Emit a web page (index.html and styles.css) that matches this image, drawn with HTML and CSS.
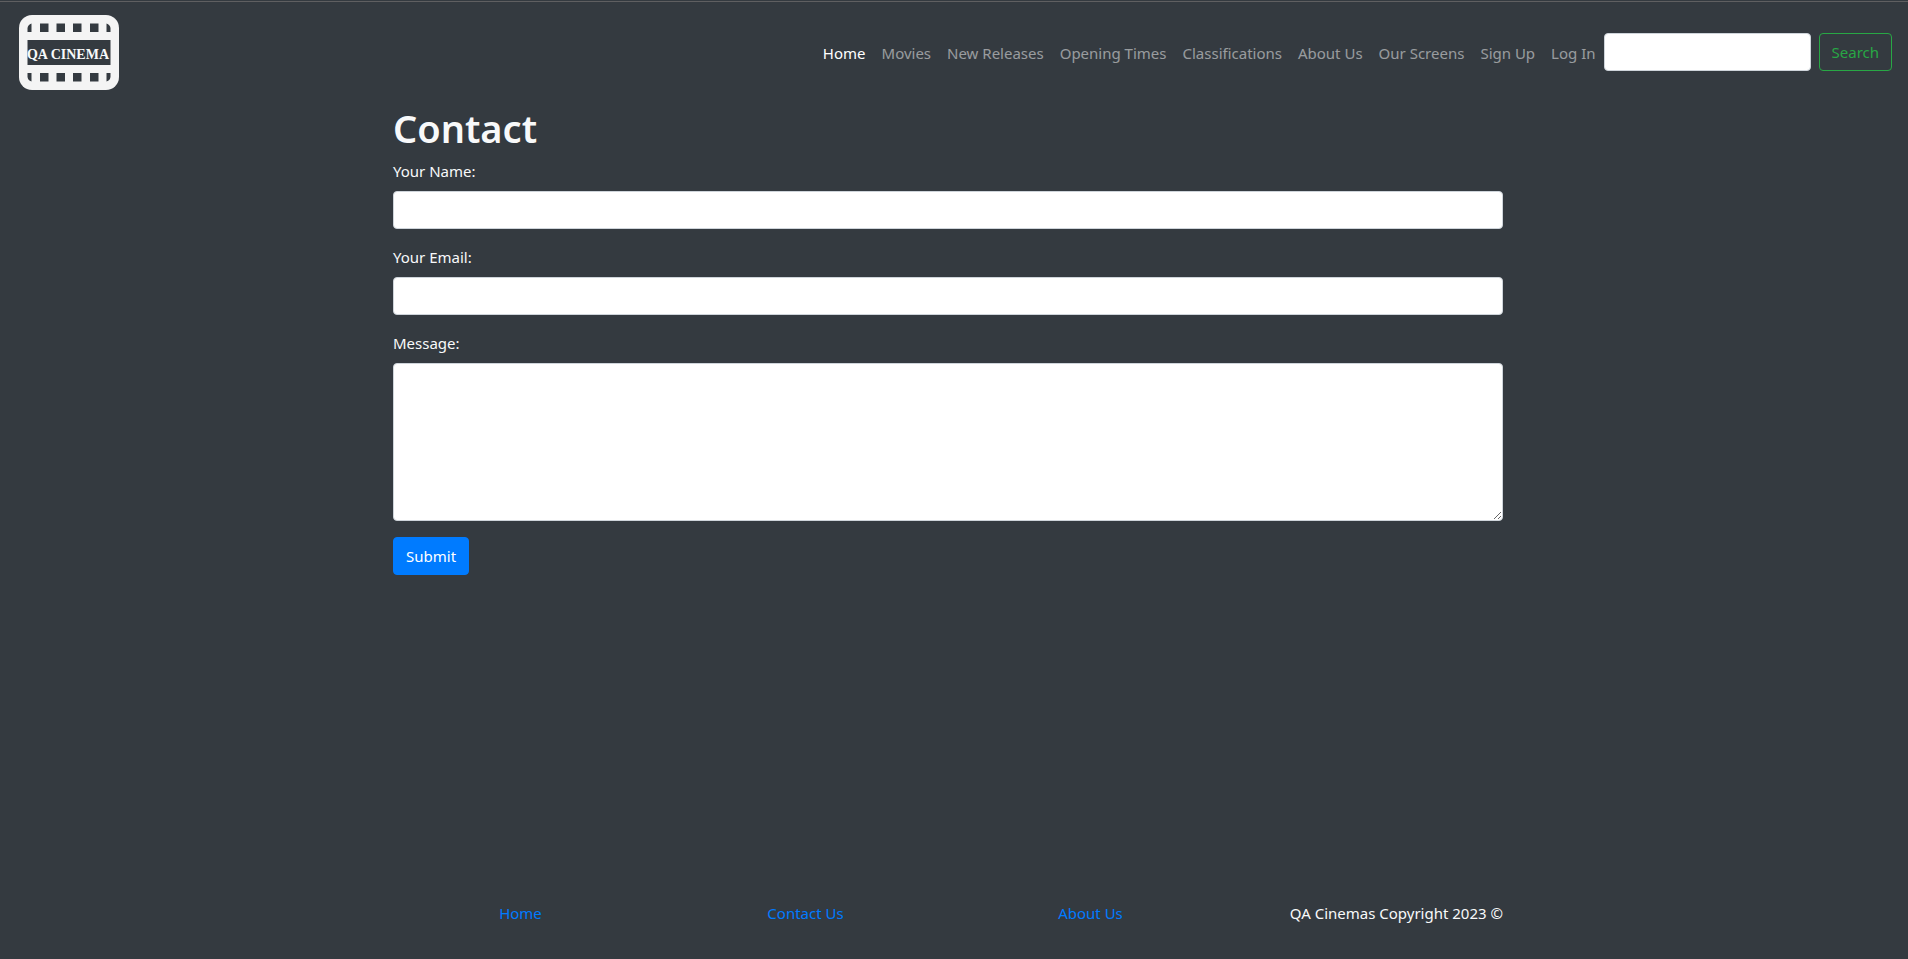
FILE: index.html
```html
<!DOCTYPE html>
<html lang="en">
<head>
<meta charset="utf-8">
<meta name="viewport" content="width=device-width, initial-scale=1">
<title>QA Cinema - Contact</title>
<link rel="stylesheet" href="styles.css">
</head>
<body>
<header class="navbar">
  <a class="brand" href="#" aria-label="QA Cinema">
    <svg class="logo" viewBox="0 0 100 75" width="100" height="75">
      <rect width="100" height="75" rx="13" fill="#f4f4f4"/>
      <g fill="#343a40">
        <path d="M12.500 8.500V17H8.500V13Q9 9.500 12.500 8.500ZM87.500 8.500V17H91.500V13Q91 9.500 87.500 8.500ZM12.500 66.500V58H8.500V62Q9 65.500 12.500 66.500ZM87.500 66.500V58H91.500V62Q91 65.500 87.500 66.500Z"/>
        <path d="M21 8.500h8.500V17H21zM37.500 8.500H46V17h-8.500zM54 8.500h8.500V17H54zM71 8.500h8.500V17H71zM21 58h8.500v8.500H21zM37.500 58H46v8.500h-8.500zM54 58h8.500v8.500H54zM71 58h8.500v8.500H71z"/>
        <rect x="8.500" y="25" width="83" height="25"/>
      </g>
      <text class="logo-text" x="49" y="44" text-anchor="middle">QA CINEMA</text>
    </svg>
  </a>
  <nav class="nav">
    <a class="nav-link active" href="#">Home</a>
    <a class="nav-link" href="#">Movies</a>
    <a class="nav-link" href="#">New Releases</a>
    <a class="nav-link" href="#">Opening Times</a>
    <a class="nav-link" href="#">Classifications</a>
    <a class="nav-link" href="#">About Us</a>
    <a class="nav-link" href="#">Our Screens</a>
    <a class="nav-link" href="#">Sign Up</a>
    <a class="nav-link" href="#">Log In</a>
  </nav>
  <form class="search">
    <input class="control search-input" type="search" aria-label="Search">
    <button class="btn btn-outline" type="submit">Search</button>
  </form>
</header>
<main class="container">
  <h1 class="title">Contact</h1>
  <form>
    <div class="group">
      <label class="label" for="name">Your Name:</label>
      <input class="control" id="name" type="text">
    </div>
    <div class="group">
      <label class="label" for="email">Your Email:</label>
      <input class="control" id="email" type="email">
    </div>
    <div class="group">
      <label class="label" for="message">Message:</label>
      <textarea class="control message" id="message" rows="6"></textarea>
    </div>
    <button class="btn btn-primary" type="submit">Submit</button>
  </form>
</main>
<footer class="footer">
  <div class="container footer-row">
    <a class="footer-link" href="#">Home</a>
    <a class="footer-link" href="#">Contact Us</a>
    <a class="footer-link" href="#">About Us</a>
    <span class="copyright">QA Cinemas Copyright 2023 ©</span>
  </div>
</footer>
</body>
</html>
```
FILE: styles.css
```css
*, *::before, *::after {
  box-sizing: border-box;
}

body {
  display: flex;
  flex-direction: column;
  min-height: 100vh;
  margin: 0;
  padding-top: 1px;
  background: #343a40;
  color: #f8f9fa;
  font-family: "Segoe UI", "Noto Sans", "Open Sans", sans-serif;
  font-size: 15px;
  line-height: 24px;
}

.navbar {
  display: flex;
  align-items: center;
  padding: 13px 16px;
  border-top: 1px solid #5f5f61;
}

.brand {
  display: flex;
  margin-left: 3px;
}

.logo-text {
  fill: #f8f9fa;
  font-family: "Liberation Serif", serif;
  font-size: 14px;
  font-weight: 700;
}

.nav {
  display: flex;
  margin-left: auto;
}

.nav-link {
  padding: 8px;
  color: rgba(255, 255, 255, 0.5);
  text-decoration: none;
}

.nav-link.active {
  color: #fff;
}

.search {
  display: flex;
  gap: 8px;
  padding-bottom: 2px;
}

.control {
  display: block;
  width: 100%;
  height: 38px;
  padding: 6px 12px;
  border: 1px solid #ced4da;
  border-radius: 4px;
  background: #fff;
  color: #495057;
  font: inherit;
}

.search-input {
  width: 207px;
}

.message {
  height: auto;
  resize: vertical;
}

.btn {
  height: 38px;
  padding: 6px 12px;
  border: 1px solid transparent;
  border-radius: 4px;
  background: transparent;
  font: inherit;
  cursor: pointer;
}

.btn-outline {
  border-color: #28a745;
  color: #28a745;
}

.btn-primary {
  border-color: #007bff;
  background: #007bff;
  color: #fff;
}

.container {
  width: calc(100% - 12px);
  max-width: 1152px;
  margin: 0 auto;
  padding: 0 27px 0 15px;
}

.title {
  margin: 0 0 6px;
  font-size: 38px;
  font-weight: 600;
  line-height: 50px;
}

.group {
  margin-bottom: 16px;
}

.label {
  display: block;
  margin-bottom: 8px;
}

.footer {
  margin-top: auto;
  padding: 32px 0 34px;
}

.footer-row {
  display: grid;
  grid-template-columns: repeat(4, 1fr);
  gap: 30px;
  text-align: center;
}

.footer-link {
  color: #007bff;
  text-decoration: none;
}

.copyright {
  text-align: right;
}
```
